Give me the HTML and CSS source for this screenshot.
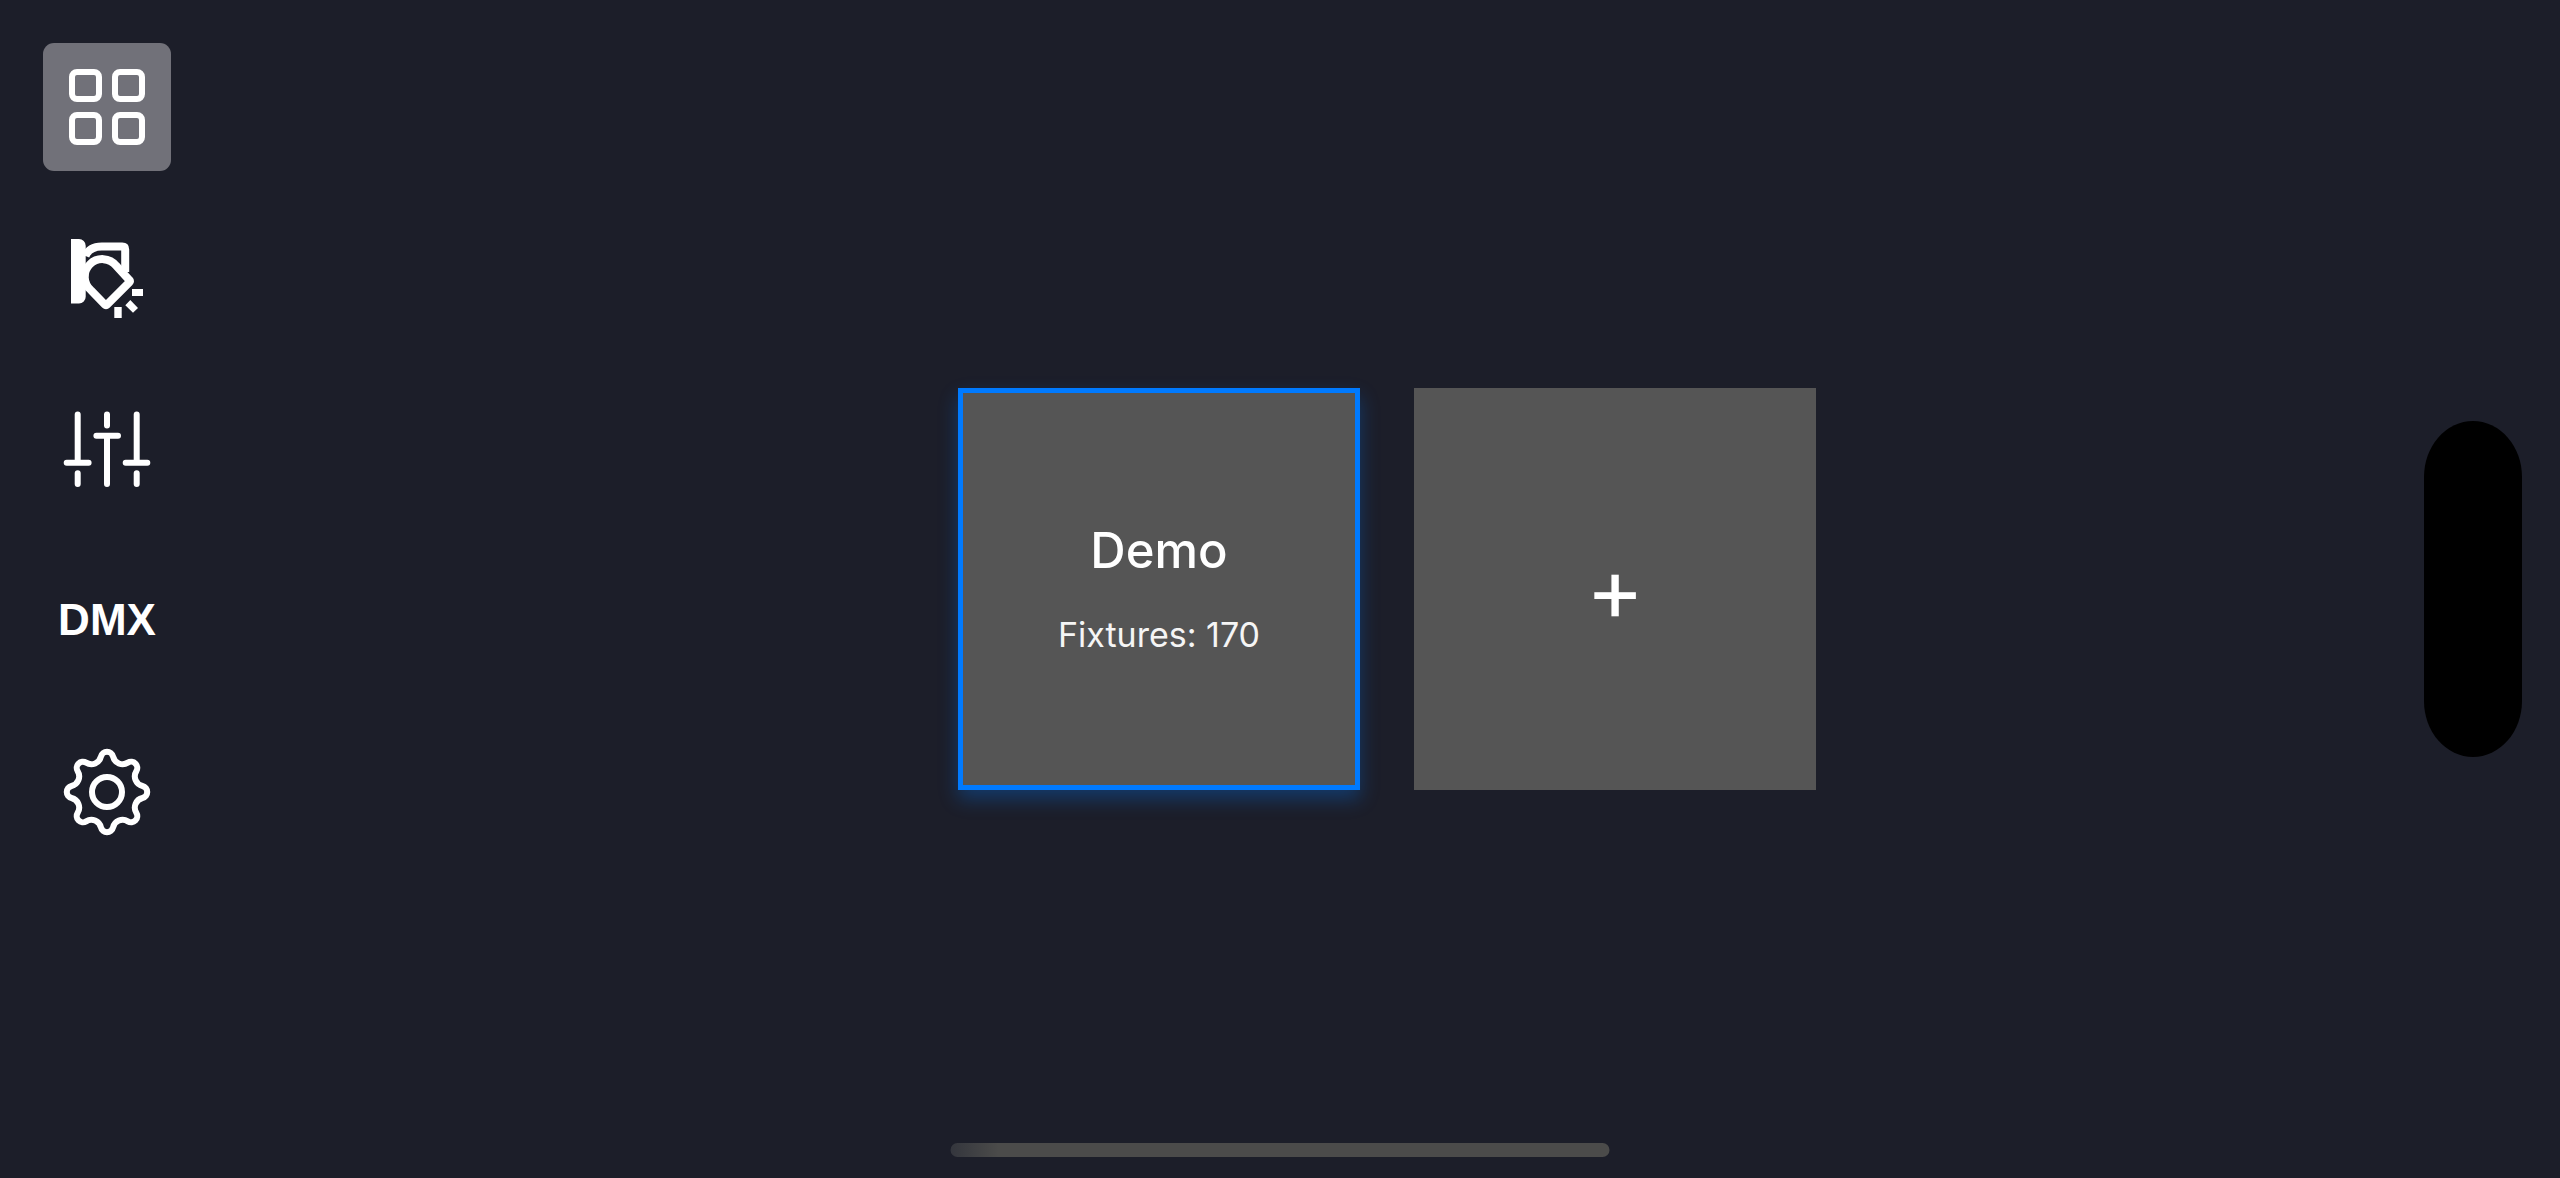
FILE: index.html
```
<!DOCTYPE html>
<html lang="en">
<head>
  <meta charset="utf-8">
  <meta name="viewport" content="width=device-width, initial-scale=1">
  <title>Projects</title>
  <link rel="stylesheet" href="styles.css">
</head>
<body>
  <div class="app">
    <nav class="sidebar" aria-label="Main">
      <button class="nav-button nav-button-active" type="button" aria-label="Projects" aria-current="page">
        <svg class="icon" viewBox="0 0 128 128" aria-hidden="true">
          <g class="stroke">
            <rect x="29" y="29" width="27" height="27" rx="5"/>
            <rect x="72" y="29" width="27" height="27" rx="5"/>
            <rect x="29" y="72" width="27" height="27" rx="5"/>
            <rect x="72" y="72" width="27" height="27" rx="5"/>
          </g>
        </svg>
      </button>
      <button class="nav-button" type="button" aria-label="Fixtures">
        <svg class="icon" viewBox="0 0 128 128" aria-hidden="true">
          <path class="fill" d="M28 25h8a6.700 6.700 0 0 1 6.700 6.700v51a6.700 6.700 0 0 1-6.700 6.700h-8z"/>
          <g class="stroke stroke-heavy">
            <path d="M42.500 42C45 36 50 32.500 58.700 32.500H79.200Q82.200 32.500 82.200 35.500V58"/>
            <path d="M73.200 51.700A17.700 17.700 0 1 0 48.200 76.500L62 90.700Q63 91.700 64 90.700L86.500 68.200Q87.500 67.200 86.500 66.200Z"/>
          </g>
          <path class="fill" d="M89 75h11v7h-11zM71.300 93h7.400v11h-7.400zM87.300 86l7.700 8-5 4.700-7.700-7.400z"/>
        </svg>
      </button>
      <button class="nav-button" type="button" aria-label="Faders">
        <svg class="icon" viewBox="0 0 128 128" aria-hidden="true">
          <path class="stroke" d="M34.700 29.500V77.800M23.700 77.800H45.600M34.700 88.200V99.100M64 29.500V40.500M53.400 50.800H75M64 50.800V99.100M93.700 29.500V77.800M82.700 77.800H104.300M93.700 88.200V99.100"/>
        </svg>
      </button>
      <button class="nav-button" type="button">DMX</button>
      <button class="nav-button" type="button" aria-label="Settings">
        <svg class="icon" viewBox="0 0 128 128" aria-hidden="true">
          <g class="stroke">
            <circle cx="64" cy="65" r="15"/>
            <path d="M57.970 29.510A6.200 6.200 0 0 1 70.030 29.510A9.800 9.800 0 0 0 84.830 35.640A6.200 6.200 0 0 1 93.360 44.170A9.800 9.800 0 0 0 99.490 58.970A6.200 6.200 0 0 1 99.490 71.030A9.800 9.800 0 0 0 93.360 85.830A6.200 6.200 0 0 1 84.830 94.360A9.800 9.800 0 0 0 70.030 100.490A6.200 6.200 0 0 1 57.970 100.490A9.800 9.800 0 0 0 43.170 94.360A6.200 6.200 0 0 1 34.640 85.830A9.800 9.800 0 0 0 28.510 71.030A6.200 6.200 0 0 1 28.510 58.970A9.800 9.800 0 0 0 34.640 44.170A6.200 6.200 0 0 1 43.170 35.640A9.800 9.800 0 0 0 57.970 29.510Z"/>
          </g>
        </svg>
      </button>
    </nav>
    <main class="projects">
      <button class="card card-selected" type="button">
        <span class="card-title">Demo</span>
        <span class="card-detail">Fixtures: 170</span>
      </button>
      <button class="card" type="button" aria-label="Add project">
        <span class="card-add">+</span>
      </button>
    </main>
  </div>
  <div class="island"></div>
  <div class="home-indicator"></div>
</body>
</html>
```
FILE: styles.css
```
* {
  box-sizing: border-box;
}

body {
  margin: 0;
  background: #1c1e29;
  color: #fff;
  font-family: Inter, "Liberation Sans", sans-serif;
}

button {
  margin: 0;
  padding: 0;
  border: 0;
  color: inherit;
  font-family: inherit;
  cursor: pointer;
}

.app {
  display: flex;
  min-height: 100vh;
}

.sidebar {
  display: flex;
  flex-direction: column;
  gap: 43px;
  padding: 43px;
}

.nav-button {
  display: flex;
  align-items: center;
  justify-content: center;
  width: 128px;
  height: 128px;
  border-radius: 11px;
  background: transparent;
  font-family: "Liberation Sans", sans-serif;
  font-size: 44px;
  font-weight: 700;
}

.nav-button-active {
  background: #717179;
}

.icon {
  width: 128px;
  height: 128px;
}

.stroke {
  fill: none;
  stroke: #fff;
  stroke-width: 6px;
  stroke-linecap: round;
  stroke-linejoin: round;
}

.stroke-heavy {
  stroke-width: 8px;
  stroke-linecap: butt;
}

.fill {
  fill: #fff;
}

.projects {
  display: flex;
  flex: 1;
  flex-wrap: wrap;
  align-items: center;
  align-content: center;
  justify-content: center;
  gap: 54px;
}

.card {
  display: flex;
  flex-direction: column;
  align-items: center;
  justify-content: center;
  gap: 34px;
  width: 402px;
  height: 402px;
  background: #555;
}

.card-selected {
  padding-bottom: 2px;
  border: 5px solid #007aff;
  box-shadow: 0 9px 18px rgba(0, 122, 255, 0.3);
}

.card-title {
  font-size: 49px;
  font-weight: 500;
  line-height: 60px;
}

.card-detail {
  font-size: 34px;
  line-height: 40px;
  color: #f5f5f5;
}

.card-add {
  font-size: 88px;
  font-weight: 400;
  line-height: 100px;
}

.island {
  position: fixed;
  top: 50%;
  right: 38px;
  width: 98px;
  height: 336px;
  border-radius: 49px / 56px;
  background: #000;
  transform: translateY(-50%);
}

.home-indicator {
  position: fixed;
  bottom: 21px;
  left: 50%;
  width: 659px;
  height: 14px;
  border-radius: 7px;
  background: linear-gradient(90deg, #34363d, #4b4b4a 48px);
  transform: translateX(-50%);
}
```
